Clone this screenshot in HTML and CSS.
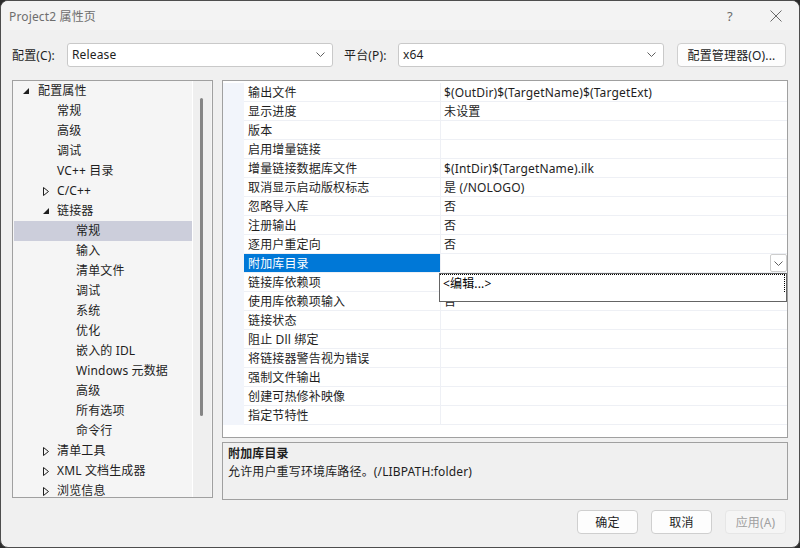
FILE: index.html
```html
<!DOCTYPE html>
<html lang="zh-CN">
<head>
<meta charset="utf-8">
<title>Project2 属性页</title>
<link rel="stylesheet" href="styles.css">
</head>
<body>
<div class="window">
  <div class="titlebar">
    <span class="title">Project2 属性页</span>
    <div class="caps">
      <span class="cap help">?</span>
      <span class="cap"><svg width="12" height="12" viewBox="0 0 12 12"><path d="M0.5 0.5 L11.5 11.5 M11.5 0.5 L0.5 11.5" stroke="#6a6a6a" stroke-width="1" fill="none"/></svg></span>
    </div>
  </div>

  <div class="toolbar">
    <span class="lbl lbl1">配置(C):</span>
    <div class="combo"><span class="combo-text">Release</span><svg class="chev" width="9" height="5" viewBox="0 0 9 5"><polyline points="0.5,0.5 4.5,4.5 8.5,0.5" stroke="#606060" fill="none"/></svg></div>
    <span class="lbl lbl2">平台(P):</span>
    <div class="combo"><span class="combo-text">x64</span><svg class="chev" width="9" height="5" viewBox="0 0 9 5"><polyline points="0.5,0.5 4.5,4.5 8.5,0.5" stroke="#606060" fill="none"/></svg></div>
    <button class="btn mgr">配置管理器(O)...</button>
  </div>

  <div class="main">
    <div class="tree">
      <div class="tree-list">
        <div class="trow l0"><span class="arr"><svg width="6" height="6" viewBox="0 0 6 6"><polygon points="6,0 6,6 0,6" fill="#1e1e1e"/></svg></span>配置属性</div>
        <div class="trow l1"><span class="arr"></span>常规</div>
        <div class="trow l1"><span class="arr"></span>高级</div>
        <div class="trow l1"><span class="arr"></span>调试</div>
        <div class="trow l1"><span class="arr"></span>VC++ 目录</div>
        <div class="trow l1"><span class="arr"><svg width="6" height="9" viewBox="0 0 6 9"><polygon points="0.5,0.5 5.5,4.5 0.5,8.5" fill="none" stroke="#1e1e1e"/></svg></span>C/C++</div>
        <div class="trow l1"><span class="arr"><svg width="6" height="6" viewBox="0 0 6 6"><polygon points="6,0 6,6 0,6" fill="#1e1e1e"/></svg></span>链接器</div>
        <div class="trow l2 sel"><span class="arr"></span>常规</div>
        <div class="trow l2"><span class="arr"></span>输入</div>
        <div class="trow l2"><span class="arr"></span>清单文件</div>
        <div class="trow l2"><span class="arr"></span>调试</div>
        <div class="trow l2"><span class="arr"></span>系统</div>
        <div class="trow l2"><span class="arr"></span>优化</div>
        <div class="trow l2"><span class="arr"></span>嵌入的 IDL</div>
        <div class="trow l2"><span class="arr"></span>Windows 元数据</div>
        <div class="trow l2"><span class="arr"></span>高级</div>
        <div class="trow l2"><span class="arr"></span>所有选项</div>
        <div class="trow l2"><span class="arr"></span>命令行</div>
        <div class="trow l1"><span class="arr"><svg width="6" height="9" viewBox="0 0 6 9"><polygon points="0.5,0.5 5.5,4.5 0.5,8.5" fill="none" stroke="#1e1e1e"/></svg></span>清单工具</div>
        <div class="trow l1"><span class="arr"><svg width="6" height="9" viewBox="0 0 6 9"><polygon points="0.5,0.5 5.5,4.5 0.5,8.5" fill="none" stroke="#1e1e1e"/></svg></span>XML 文档生成器</div>
        <div class="trow l1"><span class="arr"><svg width="6" height="9" viewBox="0 0 6 9"><polygon points="0.5,0.5 5.5,4.5 0.5,8.5" fill="none" stroke="#1e1e1e"/></svg></span>浏览信息</div>
      </div>
      <div class="vscroll"><div class="thumb"></div></div>
    </div>

    <div class="right">
      <div class="grid">
        <div class="grow"><span class="gut"></span><span class="name">输出文件</span><span class="val">$(OutDir)$(TargetName)$(TargetExt)</span></div>
        <div class="grow"><span class="gut"></span><span class="name">显示进度</span><span class="val">未设置</span></div>
        <div class="grow"><span class="gut"></span><span class="name">版本</span><span class="val"></span></div>
        <div class="grow"><span class="gut"></span><span class="name">启用增量链接</span><span class="val"></span></div>
        <div class="grow"><span class="gut"></span><span class="name">增量链接数据库文件</span><span class="val">$(IntDir)$(TargetName).ilk</span></div>
        <div class="grow"><span class="gut"></span><span class="name">取消显示启动版权标志</span><span class="val">是 (/NOLOGO)</span></div>
        <div class="grow"><span class="gut"></span><span class="name">忽略导入库</span><span class="val">否</span></div>
        <div class="grow"><span class="gut"></span><span class="name">注册输出</span><span class="val">否</span></div>
        <div class="grow"><span class="gut"></span><span class="name">逐用户重定向</span><span class="val">否</span></div>
        <div class="grow active"><span class="gut"></span><span class="name">附加库目录</span><span class="val"><span class="dd"><svg width="9" height="5" viewBox="0 0 9 5"><polyline points="0.5,0.5 4.5,4.5 8.5,0.5" stroke="#606060" fill="none"/></svg></span></span></div>
        <div class="grow"><span class="gut"></span><span class="name">链接库依赖项</span><span class="val"></span></div>
        <div class="grow"><span class="gut"></span><span class="name">使用库依赖项输入</span><span class="val">否</span></div>
        <div class="grow"><span class="gut"></span><span class="name">链接状态</span><span class="val"></span></div>
        <div class="grow"><span class="gut"></span><span class="name">阻止 Dll 绑定</span><span class="val"></span></div>
        <div class="grow"><span class="gut"></span><span class="name">将链接器警告视为错误</span><span class="val"></span></div>
        <div class="grow"><span class="gut"></span><span class="name">强制文件输出</span><span class="val"></span></div>
        <div class="grow"><span class="gut"></span><span class="name">创建可热修补映像</span><span class="val"></span></div>
        <div class="grow"><span class="gut"></span><span class="name">指定节特性</span><span class="val"></span></div>

        <div class="popup"><div class="popup-item">&lt;编辑...&gt;</div></div>
      </div>
      <div class="desc">
        <div class="desc-title">附加库目录</div>
        <div class="desc-text">允许用户重写环境库路径。(/LIBPATH:folder)</div>
      </div>
    </div>
  </div>

  <div class="buttons">
    <button class="btn dlg">确定</button>
    <button class="btn dlg">取消</button>
    <button class="btn dlg disabled">应用(A)</button>
  </div>
</div>
</body>
</html>
```

FILE: styles.css
```css
* { box-sizing: border-box; }
html, body { margin: 0; padding: 0; }
body {
  background: #2b2b2b;
  font-family: "Noto Sans", "Noto Sans CJK SC", sans-serif;
  font-size: 12px;
  letter-spacing: 0.15px;
  color: #1e1e1e;
}
.window {
  width: 800px;
  height: 548px;
  border: 1px solid #4d4d4d;
  border-radius: 8px;
  overflow: hidden;
  background: #f0f0f0;
  display: flex;
  flex-direction: column;
}
.titlebar {
  height: 29px;
  flex: none;
  display: flex;
  align-items: center;
  background: #f3f3f3;
}
.title {
  padding-left: 8px;
  color: #6e6e6e;
  font-size: 12px;
  flex: 1;
}
.caps { display: flex; height: 29px; }
.cap {
  width: 46px;
  display: flex;
  align-items: center;
  justify-content: center;
  color: #6a6a6a;
}
.cap.help { font-size: 13px; font-family: "Noto Sans", sans-serif; }

.toolbar {
  margin-top: 12px;
  height: 25px;
  flex: none;
  display: flex;
  align-items: center;
  padding-left: 11px;
}
.lbl { flex: none; }
.lbl1 { width: 55px; }
.lbl2 { width: 54px; margin-left: 11px; }
.combo {
  flex: none;
  width: 266px;
  height: 24px;
  background: #fff;
  border: 1px solid #c9c9c9;
  border-radius: 3px;
  display: flex;
  align-items: center;
  padding: 0 7px 0 4px;
}
.combo-text { flex: 1; }
.chev { flex: none; }
.btn {
  font-family: "Noto Sans", "Noto Sans CJK SC", sans-serif;
  font-size: 12px;
  letter-spacing: 0.15px;
  color: #1e1e1e;
  background: #fdfdfd;
  border: 1px solid #cfcfcf;
  border-radius: 4px;
  height: 24px;
  padding: 0;
  flex: none;
}
.mgr { width: 109px; margin-left: 13px; }

.main {
  margin-top: 13px;
  height: 420px;
  flex: none;
  display: flex;
  padding-left: 11px;
}
.tree {
  width: 201px;
  height: 418px;
  border: 1px solid #a0a0a0;
  background: #f5f5f5;
  display: flex;
  overflow: hidden;
}
.tree-list {
  width: 179px;
  flex: none;
  overflow: hidden;
  padding-left: 1px;
}
.trow {
  height: 20px;
  line-height: 20px;
  display: flex;
  align-items: center;
  white-space: nowrap;
}
.trow.l0 { padding-left: 5px; }
.trow.l1 { padding-left: 24px; }
.trow.l2 { padding-left: 43px; }
.trow.sel { background: #cccedb; }
.arr {
  width: 19px;
  flex: none;
  display: flex;
  align-items: center;
  padding-left: 4px;
  height: 20px;
}
.trow.l1 .arr { padding-left: 5px; }
.vscroll {
  width: 19px;
  flex: none;
  border-left: 1px solid #ffffff;
  background: #efefef;
  padding-top: 17px;
  padding-left: 7px;
}
.thumb {
  width: 3px;
  height: 318px;
  border-radius: 2px;
  background: #858585;
}

.right {
  margin-left: 9px;
  width: 566px;
  display: flex;
  flex-direction: column;
}
.grid {
  position: relative;
  height: 358px;
  border: 1px solid #a0a0a0;
  background: #fff;
  padding-top: 2px;
}
.grow {
  display: flex;
  height: 19px;
}
.gut {
  width: 21px;
  flex: none;
  background: #f2f5fb;
}
.name {
  width: 197px;
  flex: none;
  border-right: 1px solid #eef0f5;
  border-bottom: 1px solid #eef0f5;
  padding-left: 4px;
  padding-top: 1px;
  line-height: 17px;
  white-space: nowrap;
}
.val {
  flex: 1;
  border-bottom: 1px solid #eef0f5;
  padding-left: 3px;
  padding-top: 1px;
  line-height: 17px;
  white-space: nowrap;
  display: flex;
  justify-content: flex-start;
}
.grow.active .name { background: #0078d7; color: #fff; }
.grow.active .val { justify-content: flex-end; padding-right: 0; padding-top: 0; }
.dd {
  width: 17px;
  height: 18px;
  border: 1px solid #cdcdcd;
  border-radius: 2px;
  background: #fff;
  display: flex;
  align-items: center;
  justify-content: center;
}
.popup {
  position: absolute;
  left: 216px;
  top: 192px;
  width: 348px;
  height: 29px;
  border: 1px solid #646464;
  background: #fff;
  padding: 0 1px 0 0;
}
.popup-item {
  height: 18px;
  line-height: 18px;
  border-top: 1px dotted #000;
  border-right: 1px dotted #000;
  padding-left: 3px;
  color: #000;
}
.desc {
  margin-top: 4px;
  height: 58px;
  border: 1px solid #a0a0a0;
  background: #f0f0f0;
  padding: 2px 5px 0;
  line-height: 18px;
}
.desc-title { font-weight: bold; }

.buttons {
  margin-top: 10px;
  height: 24px;
  display: flex;
  justify-content: flex-end;
  gap: 13px;
  padding-right: 13px;
}
.dlg { width: 61px; }
.dlg.disabled {
  background: #f5f5f5;
  border-color: #e6e6e6;
  color: #a0a0a0;
}
```
